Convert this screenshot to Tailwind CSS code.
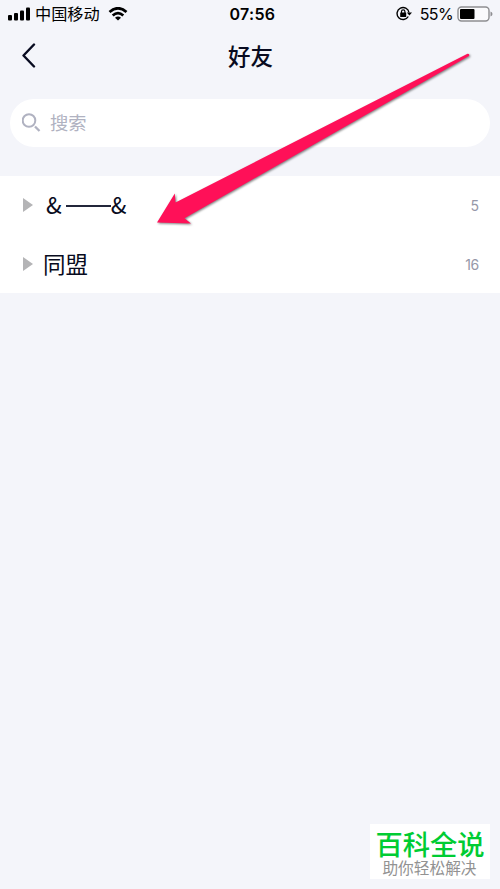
<!DOCTYPE html>
<html lang="zh-CN">
<head>
<meta charset="utf-8">
<meta name="viewport" content="width=device-width">
<title>好友</title>
<script src="https://cdn.jsdelivr.net/npm/@tailwindcss/browser@4"></script>
</head>
<body class="relative flex h-[889px] w-[500px] flex-col overflow-hidden bg-[#f4f5fa] font-['Inter','Noto_Sans_CJK_SC',sans-serif] text-[#080b20]">
  <header class="grid h-7 shrink-0 grid-cols-[1fr_auto_1fr] items-center pr-[7px] pl-2 text-black">
    <div class="flex items-center">
      <svg class="h-[14px] w-[23px]" viewBox="0 0 23 14"><rect x="0" y="8" width="4" height="5.5" rx="1"/><rect x="6" y="6" width="4" height="7.5" rx="1"/><rect x="12" y="3.5" width="4" height="10" rx="1"/><rect x="18" y="0.5" width="4" height="13" rx="1"/></svg>
      <span class="ml-1 text-[16.200px] leading-7">中国移动</span>
      <svg class="ml-2 h-[15px] w-5" viewBox="0 0 20 15" fill="none" stroke="#000" stroke-width="2.7"><path d="M1.500 5Q10-2.500 18.500 5M4.700 8.500Q10 3.700 15.300 8.500"/><path d="M10 13.500L7 10.800Q10 8.400 13 10.800Z" fill="#000" stroke="none"/></svg>
    </div>
    <span class="ml-[4px] text-[16px] leading-7 font-semibold tracking-[0.300px]">07:56</span>
    <div class="flex items-center justify-end">
      <svg class="mr-[8px] h-4 w-4" viewBox="0 0 16 16" fill="none" stroke="#000" stroke-width="1.400"><path d="M12.300 10.500A6 6 0 1 1 13 6.500"/><path d="M10.800 6.500H16L13.400 9.500Z" fill="#000" stroke="none"/><rect x="4.200" y="6.500" width="6" height="4.500" rx=".5" fill="#000" stroke="none"/><path d="M5.500 7V5.500a1.700 1.700 0 0 1 3.400 0v1.500" stroke-width="1.200"/></svg>
      <span class="text-base leading-7 tracking-[-0.600px]">55%</span>
      <svg class="ml-1 h-4 w-9" viewBox="0 0 36 16"><rect x="1" y="1" width="31" height="14" rx="3.500" fill="#fafafc" stroke="#8e8e91" stroke-width="1.400"/><rect x="3" y="3" width="14.500" height="10" rx="1"/><path d="M33.500 5.500Q35.500 6.300 35.500 8T33.500 10.500Z" fill="#8e8e91"/></svg>
    </div>
  </header>
  <nav class="grid h-[54px] shrink-0 grid-cols-[1fr_auto_1fr] items-center pl-[21px]">
    <svg class="mb-[2px] h-[26px] w-4" viewBox="0 0 16 26" fill="none" stroke="#080b20" stroke-width="2.400" stroke-linecap="round" stroke-linejoin="round"><path d="M13 2.500L2.500 13.500L13 24.500"/></svg>
    <h1 class="mt-[2px] mr-[20px] text-[22.500px] leading-[54px] font-medium">好友</h1>
  </nav>
  <section class="mx-[10px] mt-[17px] flex h-12 shrink-0 items-center rounded-full bg-white pl-3 text-[#b0b2c1]">
    <svg class="h-5 w-[19px]" viewBox="0 0 19 20" fill="none" stroke="currentColor" stroke-width="2"><circle cx="7" cy="7.500" r="6.300"/><path d="M13 13.500L17.500 18" stroke-width="2.300"/></svg>
    <span class="mb-px ml-[9px] text-[18.300px] leading-6">搜索</span>
  </section>
  <main class="mt-[29px] flex h-[117px] shrink-0 flex-col bg-white">
    <div class="flex h-[59px] items-center pr-[21px] pl-[23px]">
      <svg class="mb-px h-[14px] w-[10px]" viewBox="0 0 10 14"><path d="M0 0L10 7L0 14Z" fill="#b4b4b6"/></svg>
      <div class="ml-[13px] flex items-center text-[23px] leading-[54px]"><span class="mb-[3px] font-['Noto_Sans_CJK_SC']">&amp;</span><span class="ml-[4px] h-[2px] w-[45px] bg-[#23263a]"></span><span class="mb-[3px] font-['Noto_Sans_CJK_SC']">&amp;</span></div>
      <span class="ml-auto text-[14px] text-[#9698a8]">5</span>
    </div>
    <div class="flex h-[58px] items-center pr-[21px] pl-[23px]">
      <svg class="h-[14px] w-[10px]" viewBox="0 0 10 14"><path d="M0 0L10 7L0 14Z" fill="#b4b4b6"/></svg>
      <span class="mt-[2px] ml-[10px] text-[22.500px] leading-[56px]">同盟</span>
      <span class="ml-auto text-[14px] tracking-[-0.300px] text-[#9698a8]">16</span>
    </div>
  </main>
  <svg class="pointer-events-none absolute inset-0 h-[300px] w-[500px] drop-shadow-[1px_1px_1px_rgba(0,0,0,0.5)]" viewBox="0 0 500 300"><path d="M467.500 53.800Q470 54 469 56L184.500 218.300L191 223.500L157 222.500L174.800 193.500L175.500 202.500Z" fill="#ff1058"/></svg>
  <aside class="mt-auto mr-[10px] mb-[10px] flex h-[55px] w-[120px] shrink-0 flex-col items-center self-end bg-white">
    <strong class="mt-[6px] text-[27.300px] leading-[31px] font-medium text-[#0c3]">百科全说</strong>
    <span class="mr-px text-[15.700px] leading-[16px] text-[#929292]">助你轻松解决</span>
  </aside>
</body>
</html>
